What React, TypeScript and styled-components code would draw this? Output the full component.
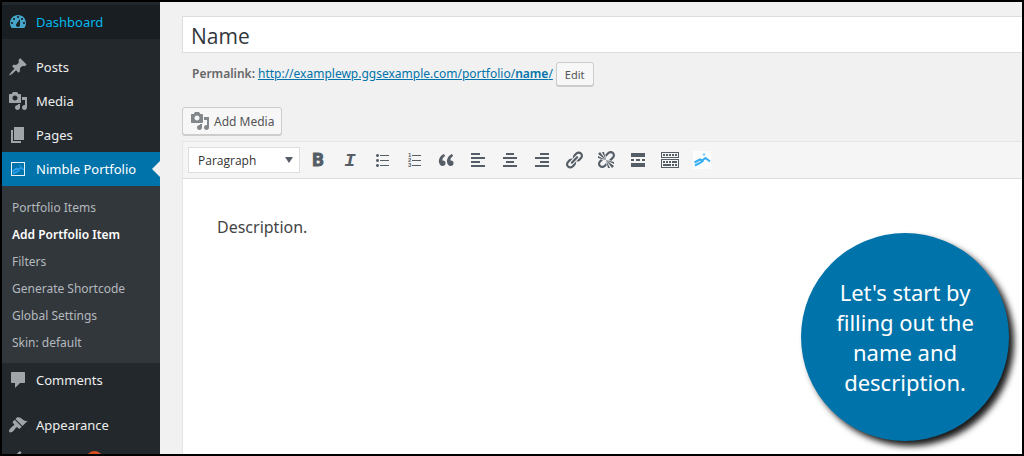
import React from "react";
import styled, { createGlobalStyle } from "styled-components";

const GlobalStyle = createGlobalStyle`
  *, *::before, *::after { box-sizing: border-box; }
  body {
    margin: 0;
    background: #f1f1f1;
    color: #444;
    font: 13px/20px "Noto Sans", "Open Sans", sans-serif;
  }
  button, input, select, textarea { font-family: inherit; margin: 0; }
`;

const Frame = styled.div`
  position: relative;
  display: flex;
  height: 100vh;
  overflow: hidden;
  border: 2px solid #000;
`;

const Sidebar = styled.nav`
  flex: 0 0 158px;
  padding-top: 3px;
  background: #23282d;
`;

const MenuList = styled.ul`
  list-style: none;
  margin: 0;
  padding: 0;
`;

const MenuItem = styled.li<{ $gap?: boolean }>`
  margin-top: ${(p) => (p.$gap ? "11px" : "0")};
`;

type LinkState = "plain" | "hover" | "current";

const linkBack = { plain: "transparent", hover: "#191e23", current: "#0073aa" };
const linkText = { plain: "#eee", hover: "#00b9eb", current: "#fff" };
const linkIcon = { plain: "#a0a5aa", hover: "#45a5c9", current: "#fff" };

const MenuLink = styled.a<{ $state: LinkState }>`
  position: relative;
  display: flex;
  align-items: center;
  gap: 8px;
  height: 34px;
  padding-left: 6px;
  background: ${(p) => linkBack[p.$state]};
  color: ${(p) => linkText[p.$state]};
  text-decoration: none;
  white-space: nowrap;

  svg { color: ${(p) => linkIcon[p.$state]}; }

  &::after {
    content: "";
    display: ${(p) => (p.$state === "current" ? "block" : "none")};
    position: absolute;
    right: 0;
    top: 9px;
    border: 8px solid transparent;
    border-left-width: 0;
    border-right-color: #f1f1f1;
  }
`;

const UpdateCount = styled.span`
  width: 17px;
  height: 17px;
  margin-left: 50px;
  border-radius: 50%;
  background: #d54e21;
`;

const SubMenu = styled.ul`
  list-style: none;
  margin: 0;
  padding: 8px 0 7px;
  background: #32373c;
`;

const SubLink = styled.a<{ $current?: boolean }>`
  display: block;
  padding-left: 10px;
  font-size: 12px;
  line-height: 27px;
  font-weight: ${(p) => (p.$current ? 600 : 400)};
  color: ${(p) => (p.$current ? "#fff" : "#b4b9be")};
  text-decoration: none;
`;

const Main = styled.main`
  flex: 1;
  min-width: 0;
  display: flex;
  flex-direction: column;
  align-items: flex-start;
  padding: 14px 0 0 22px;
`;

const TitleInput = styled.input`
  width: 100%;
  height: 37px;
  padding: 2px 8px 0;
  border: 1px solid #ddd;
  border-right: 0;
  background: #fff;
  color: #32373c;
  font-family: "Open Sans", "Noto Sans", sans-serif;
  font-size: 21px;
  outline: 0;
`;

const Permalink = styled.div`
  display: flex;
  align-items: center;
  gap: 3px;
  height: 24px;
  margin: 9px 0 21px 10px;
  font-size: 12px;
  color: #666;
  white-space: nowrap;

  strong { font-weight: 600; }
  a { color: #0073aa; }
`;

const Button = styled.button<{ $small?: boolean }>`
  display: inline-flex;
  align-items: center;
  gap: 4px;
  height: ${(p) => (p.$small ? "24px" : "28px")};
  padding: 0 ${(p) => (p.$small ? "8px" : "7px")};
  border: 1px solid #ccc;
  border-radius: 3px;
  background: #f7f7f7;
  box-shadow: 0 1px 0 #ccc;
  color: #555;
  font-size: ${(p) => (p.$small ? "11px" : "12px")};
  white-space: nowrap;

  svg { color: #82878c; }
`;

const Editor = styled.section`
  flex: 1;
  display: flex;
  flex-direction: column;
  width: 100%;
  margin-top: 6px;
  border: 1px solid #e5e5e5;
  border-width: 1px 0 0 1px;
  background: #fff;
`;

const Toolbar = styled.div`
  display: flex;
  align-items: center;
  gap: 4px;
  height: 37px;
  padding: 0 5px;
  border-bottom: 1px solid #ddd;
  background: #f5f5f5;
`;

const FormatBox = styled.div`
  display: grid;
  align-items: center;
  width: 112px;

  select, svg { grid-area: 1 / 1; }
  svg { justify-self: end; margin-right: 7px; color: #555d66; pointer-events: none; }
`;

const FormatSelect = styled.select`
  appearance: none;
  width: 100%;
  height: 26px;
  padding: 0 24px 0 9px;
  border: 1px solid #ddd;
  border-radius: 0;
  background: #fff;
  color: #333;
  font-family: "Open Sans", "Noto Sans", sans-serif;
  font-size: 12px;
`;

const ToolButton = styled.button`
  display: flex;
  align-items: center;
  justify-content: center;
  width: 28px;
  height: 28px;
  padding: 0;
  border: 0;
  background: none;
  color: #555d66;
`;

const BoldMark = styled.b`
  font: bold 18px/20px Roboto, "Liberation Sans", sans-serif;
  -webkit-text-stroke: 1px currentColor;
`;

const ItalicMark = styled.i`
  padding-top: 2px;
  font: italic bold 19px/20px "Liberation Mono", monospace;
`;

const Body = styled.textarea`
  flex: 1;
  width: 100%;
  padding: 36px 34px;
  border: 0;
  resize: none;
  outline: 0;
  background: #fff;
  color: #444;
  font-size: 16px;
  line-height: 24px;
`;

const Callout = styled.aside`
  position: absolute;
  right: 13px;
  bottom: 13px;
  display: flex;
  align-items: center;
  justify-content: center;
  width: 208px;
  height: 208px;
  padding: 0 30px;
  border-radius: 50%;
  background: #0073aa;
  box-shadow: 5px 5px 6px rgba(0, 0, 0, 0.9);
  color: #fff;
  font-size: 22px;
  line-height: 30px;
  text-align: center;
`;

const Icon = ({ d }: { d: string }) => (
  <svg width="20" height="20" viewBox="0 0 20 20" fill="currentColor" aria-hidden="true">
    <path d={d} />
  </svg>
);

const paths = {
  dashboard:
    "M3.76 16h12.48c1.1-1.37 1.76-3.11 1.76-5 0-4.42-3.58-8-8-8s-8 3.58-8 8c0 1.89.66 3.63 1.76 5zM10 4c.55 0 1 .45 1 1s-.45 1-1 1-1-.45-1-1 .45-1 1-1zM6 6c.55 0 1 .45 1 1s-.45 1-1 1-1-.45-1-1 .45-1 1-1zm8 0c.55 0 1 .45 1 1s-.45 1-1 1-1-.45-1-1 .45-1 1-1zm-5.37 5.55L12 7v6c0 1.1-.9 2-2 2s-2-.9-2-2c0-.57.24-1.08.63-1.45zM4 10c.55 0 1 .45 1 1s-.45 1-1 1-1-.45-1-1 .45-1 1-1zm12 0c.55 0 1 .45 1 1s-.45 1-1 1-1-.45-1-1 .45-1 1-1z",
  posts:
    "M10.44 3.02l1.82-1.82 6.36 6.35-1.83 1.82c-1.05-.68-2.48-.57-3.41.36l-.75.75c-.92.93-1.04 2.35-.35 3.41l-1.83 1.82-2.41-2.41-2.8 2.79c-.42.42-3.38 2.71-3.8 2.29s1.86-3.39 2.28-3.81l2.79-2.79L4.1 9.36l1.83-1.82c1.05.69 2.48.57 3.4-.36l.75-.75c.93-.92 1.05-2.35.36-3.41z",
  media:
    "M13 11V4c0-.55-.45-1-1-1h-1.67L9 1H5L3.67 3H2c-.55 0-1 .45-1 1v7c0 .55.45 1 1 1h10c.55 0 1-.45 1-1zM7 4.5c1.38 0 2.5 1.12 2.5 2.5S8.38 9.5 7 9.5 4.5 8.38 4.5 7 5.62 4.5 7 4.5zM14 6h5v10.5c0 1.38-1.12 2.5-2.5 2.5S14 17.88 14 16.5s1.12-2.5 2.5-2.5c.17 0 .34.02.5.05V9h-3V6zm-4 8.05V13h2v3.5c0 1.38-1.12 2.5-2.5 2.5S7 17.88 7 16.5 8.12 14 9.5 14c.17 0 .34.02.5.05z",
  pages: "M6 15V2h10v13H6zm-1 1h8v2H3V5h2v11z",
  comments: "M4 2h12c.6 0 1 .4 1 1v9c0 .6-.4 1-1 1h-4l-5 5v-5H4c-.6 0-1-.4-1-1V3c0-.6.4-1 1-1z",
  appearance:
    "M14.48 11.06L7.41 3.99l1.5-1.5c.5-.56 2.3-.47 3.51.32 1.21.8 1.43 1.28 2.91 2.1 1.18.64 2.45 1.26 4.45.85zm-.71.71L6.7 4.7 4.93 6.47c-.39.39-.39 1.02 0 1.41l1.06 1.06c.39.39.39 1.03 0 1.42-.6.6-1.43 1.11-2.21 1.69-.35.26-.7.53-1.01.84C1.43 14.23.4 16.08 1.4 17.07c.99 1 2.84-.03 4.18-1.36.31-.31.58-.66.85-1.02.57-.78 1.08-1.61 1.69-2.21.39-.39 1.02-.39 1.41 0l1.06 1.06c.39.39 1.02.39 1.41 0z",
  plugins:
    "M13.11 4.36L9.87 7.6 8 5.73l3.24-3.24c.35-.34 1.05-.2 1.56.32.52.51.66 1.21.31 1.55zm-8 1.77l.91-1.12 9.01 9.01-1.19.84c-.71.71-2.63 1.16-3.82 1.16H6.14L4.9 17.26c-.59.59-1.54.59-2.12 0-.59-.58-.59-1.53 0-2.12l1.24-1.24v-3.88c0-1.13.4-3.19 1.09-3.89zm7.26 3.97l3.24-3.24c.34-.35 1.04-.21 1.55.31.52.51.66 1.21.31 1.55l-3.24 3.25z",
  bullets:
    "M5.5 7C4.67 7 4 6.33 4 5.5 4 4.68 4.67 4 5.5 4 6.32 4 7 4.68 7 5.5 7 6.33 6.32 7 5.5 7zM8 5h9v1H8V5zm-2.5 7c-.83 0-1.5-.67-1.5-1.5C4 9.68 4.67 9 5.5 9c.82 0 1.5.68 1.5 1.5 0 .83-.68 1.5-1.5 1.5zM8 10h9v1H8v-1zm-2.5 7c-.83 0-1.5-.67-1.5-1.5 0-.82.67-1.5 1.5-1.5.82 0 1.5.68 1.5 1.5 0 .83-.68 1.5-1.5 1.5zM8 15h9v1H8v-1z",
  quote:
    "M9.49 13.22c0-.74-.2-1.38-.61-1.9-.62-.78-1.83-.88-2.53-.72-.29-1.65 1.11-3.75 2.92-4.65L7.88 4c-2.73 1.3-5.42 4.28-4.96 8.05C3.21 14.43 4.59 16 6.54 16c.85 0 1.56-.25 2.12-.75s.83-1.18.83-2.03zm8.05 0c0-.74-.2-1.38-.61-1.9-.63-.78-1.83-.88-2.53-.72-.29-1.65 1.11-3.75 2.92-4.65L15.93 4c-2.73 1.3-5.41 4.28-4.95 8.05.29 2.38 1.66 3.95 3.61 3.95.85 0 1.56-.25 2.12-.75s.83-1.18.83-2.03z",
  left: "M12 5V3H3v2h9zm5 4V7H3v2h14zm-5 4v-2H3v2h9zm5 4v-2H3v2h14z",
  center: "M14 5V3H6v2h8zm3 4V7H3v2h14zm-3 4v-2H6v2h8zm3 4v-2H3v2h14z",
  right: "M17 5V3H8v2h9zm0 4V7H3v2h14zm0 4v-2H8v2h9zm0 4v-2H3v2h14z",
  link: "M17.74 2.76c1.68 1.69 1.68 4.41 0 6.1l-1.53 1.52c-1.12 1.12-2.7 1.47-4.14 1.09l2.62-2.61.76-.77.76-.76c.84-.84.84-2.2 0-3.04-.84-.85-2.2-.85-3.04 0l-.77.76-3.38 3.38c-.37-1.44-.02-3.02 1.1-4.14l1.52-1.53c1.69-1.68 4.42-1.68 6.1 0zM8.59 13.43l5.34-5.34c.42-.42.42-1.1 0-1.52-.44-.43-1.13-.39-1.53 0l-5.33 5.34c-.42.42-.42 1.1 0 1.52.44.43 1.13.39 1.52 0zm-.76 2.29l4.14-4.15c.38 1.44.03 3.02-1.09 4.14l-1.52 1.53c-1.69 1.68-4.41 1.68-6.1 0-1.68-1.68-1.68-4.42 0-6.1l1.53-1.52c1.12-1.12 2.7-1.47 4.14-1.1l-4.14 4.15c-.85.84-.85 2.2 0 3.05.84.84 2.2.84 3.04 0z",
  unlink:
    "M17.74 2.26c1.68 1.69 1.68 4.41 0 6.1l-1.53 1.52c-.32.33-.69.58-1.08.77L13 10l1.69-1.64.76-.77.76-.76c.84-.84.84-2.2 0-3.04-.84-.85-2.2-.85-3.04 0l-.77.76-.76.76L10 7l-.65-2.14c.19-.38.44-.75.77-1.07l1.52-1.53c1.69-1.68 4.42-1.68 6.1 0zM2 4l8 6-6-8zm4-2l4 8-2-8H6zM2 6l8 4-8-2V6zm7.36 7.69L10 13l.74 2.35-1.38 1.39c-1.69 1.68-4.41 1.68-6.1 0-1.68-1.68-1.68-4.42 0-6.1l1.39-1.38L7 10l-.69.64-1.52 1.53c-.85.84-.85 2.2 0 3.04.84.85 2.2.85 3.04 0zM18 16l-8-6 6 8zm-4 2l-4-8 2 8h2zm4-4l-8-4 8 2v2z",
  more: "M17 7V3H3v4h14zM6 11V9H3v2h3zm6 0V9H8v2h4zm5 0V9h-3v2h3zm0 6v-4H3v4h14z",
  toggle:
    "M19 2v6H1V2h18zm-1 5V3H2v4h16zM5 4v2H3V4h2zm3 0v2H6V4h2zm3 0v2H9V4h2zm3 0v2h-2V4h2zm3 0v2h-2V4h2zm2 5v9H1V9h18zm-1 8v-7H2v7h16zM5 11v2H3v-2h2zm3 0v2H6v-2h2zm3 0v2H9v-2h2zm6 0v2h-5v-2h5zm-6 3v2H3v-2h8zm3 0v2h-2v-2h2zm3 0v2h-2v-2h2z",
};

const PortfolioIcon = () => (
  <svg width="20" height="20" viewBox="0 0 20 20" fill="none" aria-hidden="true">
    <rect x="3.5" y="3.5" width="13" height="13" stroke="#e8f3f8" />
    <path d="M4.500 12.500l4-3 2 1 2.500-2 3 2.500M5 14.500l3.500-1.500 3-2" stroke="#2ea2f0" strokeWidth="1.600" />
    <circle cx="12" cy="6.500" r="0.800" fill="#2ea2f0" />
  </svg>
);

const NimbleIcon = () => (
  <svg width="20" height="20" viewBox="0 0 20 20" fill="none" aria-hidden="true">
    <rect x="1" y="1" width="18" height="18" fill="#fcfcfc" />
    <path d="M2.500 12.500l5.500-3 2 1 3.500-2.500 4.500 3.500M3 15.500l5-2.500 3.500-2.500" stroke="#35aef2" strokeWidth="2" />
    <circle cx="12" cy="4.500" r="1.200" fill="#7ccbf6" />
  </svg>
);

const NumbersIcon = () => (
  <svg width="20" height="20" viewBox="0 0 20 20" fill="currentColor" aria-hidden="true">
    <path d="M8 5h9v1H8zM8 10h9v1H8zM8 15h9v1H8z" />
    <g fontFamily="Liberation Sans, sans-serif" fontSize="6" fontWeight="700">
      <text x="4" y="7">1</text>
      <text x="4" y="12">2</text>
      <text x="4" y="17">3</text>
    </g>
  </svg>
);

const subItems = ["Portfolio Items", "Add Portfolio Item", "Filters", "Generate Shortcode", "Global Settings", "Skin: default"];

const tools: [string, React.ReactNode][] = [
  ["Bold", <BoldMark>B</BoldMark>],
  ["Italic", <ItalicMark>I</ItalicMark>],
  ["Bulleted list", <Icon d={paths.bullets} />],
  ["Numbered list", <NumbersIcon />],
  ["Blockquote", <Icon d={paths.quote} />],
  ["Align left", <Icon d={paths.left} />],
  ["Align center", <Icon d={paths.center} />],
  ["Align right", <Icon d={paths.right} />],
  ["Insert link", <Icon d={paths.link} />],
  ["Remove link", <Icon d={paths.unlink} />],
  ["Read more", <Icon d={paths.more} />],
  ["Toolbar toggle", <Icon d={paths.toggle} />],
  ["Nimble Portfolio", <NimbleIcon />],
];

export default function App() {
  return (
    <>
      <GlobalStyle />
      <Frame>
        <Sidebar aria-label="Admin menu">
          <MenuList>
            <MenuItem>
              <MenuLink href="#" $state="hover"><Icon d={paths.dashboard} />Dashboard</MenuLink>
            </MenuItem>
            <MenuItem $gap>
              <MenuLink href="#" $state="plain"><Icon d={paths.posts} />Posts</MenuLink>
            </MenuItem>
            <MenuItem>
              <MenuLink href="#" $state="plain"><Icon d={paths.media} />Media</MenuLink>
            </MenuItem>
            <MenuItem>
              <MenuLink href="#" $state="plain"><Icon d={paths.pages} />Pages</MenuLink>
            </MenuItem>
            <MenuItem>
              <MenuLink href="#" $state="current"><PortfolioIcon />Nimble Portfolio</MenuLink>
              <SubMenu>
                {subItems.map((name) => (
                  <li key={name}>
                    <SubLink href="#" $current={name === "Add Portfolio Item"}>{name}</SubLink>
                  </li>
                ))}
              </SubMenu>
            </MenuItem>
            <MenuItem>
              <MenuLink href="#" $state="plain"><Icon d={paths.comments} />Comments</MenuLink>
            </MenuItem>
            <MenuItem $gap>
              <MenuLink href="#" $state="plain"><Icon d={paths.appearance} />Appearance</MenuLink>
            </MenuItem>
            <MenuItem>
              <MenuLink href="#" $state="plain" aria-label="Updates">
                <Icon d={paths.plugins} />
                <UpdateCount />
              </MenuLink>
            </MenuItem>
          </MenuList>
        </Sidebar>
        <Main>
          <TitleInput aria-label="Title" defaultValue="Name" />
          <Permalink>
            <strong>Permalink:</strong>
            <a href="#">http://examplewp.ggsexample.com/portfolio/<strong>name</strong>/</a>
            <Button type="button" $small>Edit</Button>
          </Permalink>
          <Button type="button"><Icon d={paths.media} />Add Media</Button>
          <Editor>
            <Toolbar>
              <FormatBox>
                <FormatSelect aria-label="Format"><option>Paragraph</option></FormatSelect>
                <svg width="8" height="6" viewBox="0 0 8 6" fill="currentColor" aria-hidden="true">
                  <path d="M0 0h8L4 6z" />
                </svg>
              </FormatBox>
              {tools.map(([label, mark]) => (
                <ToolButton key={label} type="button" aria-label={label}>{mark}</ToolButton>
              ))}
            </Toolbar>
            <Body aria-label="Description" defaultValue="Description." />
          </Editor>
        </Main>
        <Callout>Let's start by filling out the name and description.</Callout>
      </Frame>
    </>
  );
}
